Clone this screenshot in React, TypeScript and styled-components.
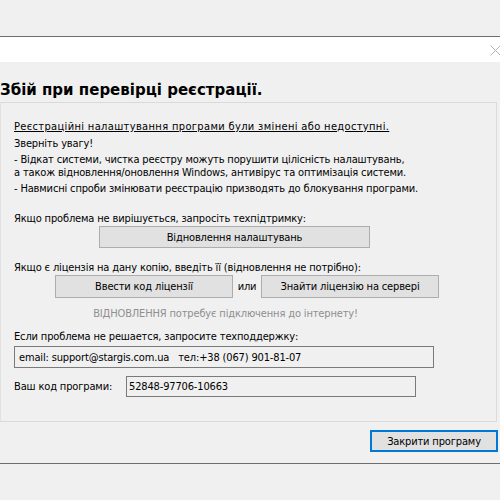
import React from "react";
import styled, { createGlobalStyle } from "styled-components";

const Global = createGlobalStyle`
  html, body { margin: 0; padding: 0; background: #f0f0f0; }
  body { width: 500px; height: 500px; overflow: hidden; font-family: "DejaVu Sans Condensed", "DejaVu Sans", Tahoma, sans-serif; font-size: 11px; letter-spacing: -0.15px; color: #000; }
`;

const Page = styled.div`
  width: 500px;
  height: 500px;
  display: flex;
  flex-direction: column;
  background: #f0f0f0;
`;

const TopStrip = styled.div`
  height: 36px;
  background: #f0f0f0;
`;

const Window = styled.div`
  border-top: 1px solid #6e6e6e;
  border-bottom: 1px solid #6e6e6e;
  background: #f0f0f0;
  display: flex;
  flex-direction: column;
`;

const TitleBar = styled.div`
  height: 25px;
  background: #ffffff;
  display: flex;
  align-items: center;
  justify-content: flex-end;
  overflow: hidden;
`;

const CloseGlyph = styled.svg`
  width: 11px;
  height: 11px;
  margin-right: -1px;
  margin-top: 1px;
`;

const Heading = styled.h1`
  margin: 18px 0 2px 0;
  font-family: "DejaVu Sans", Tahoma, sans-serif;
  font-weight: bold;
  font-size: 15px;
  letter-spacing: 0;
  line-height: 20px;
  white-space: nowrap;
`;

const Panel = styled.div`
  margin-right: 3px;
  border: 1px solid #dadada;
  border-left-color: #e2e2e2;
  padding: 17px 0 24px 13px;
  display: flex;
  flex-direction: column;
`;

const Line = styled.div<{ $mt?: number; $u?: boolean }>`
  line-height: 13px;
  margin-top: ${(p) => p.$mt ?? 0}px;
  text-decoration: ${(p) => (p.$u ? "underline" : "none")};
  letter-spacing: ${(p) => (p.$u ? "0.35px" : "inherit")};
  white-space: nowrap;
`;

const Notice = styled(Line)`
  color: #8f8f8f;
  margin-left: 79px;
  width: 265px;
  text-align: center;
`;

const Button = styled.button<{ $w: number; $h?: number }>`
  width: ${(p) => p.$w}px;
  height: ${(p) => p.$h ?? 22}px;
  background: #e1e1e1;
  border: 1px solid #adadad;
  font: inherit;
  letter-spacing: inherit;
  color: #000;
  padding: 0;
  flex: none;
  white-space: nowrap;
`;

const Row = styled.div<{ $mt: number; $ml?: number }>`
  display: flex;
  align-items: center;
  margin-top: ${(p) => p.$mt}px;
  margin-left: ${(p) => p.$ml ?? 0}px;
`;

const Or = styled.span`
  width: 28px;
  text-align: center;
`;

const Field = styled.div<{ $w: number; $h: number; $pl: number }>`
  width: ${(p) => p.$w}px;
  height: ${(p) => p.$h}px;
  flex: none;
  box-sizing: border-box;
  border: 1px solid #7a7a7a;
  background: #f0f0f0;
  padding-left: ${(p) => p.$pl}px;
  display: flex;
  align-items: center;
  white-space: pre;
`;

const CodeLabel = styled.span`
  width: 112px;
  flex: none;
  white-space: nowrap;
`;

const Footer = styled.div`
  display: flex;
  justify-content: flex-end;
  padding: 8px 2px 11px 0;
`;

const PrimaryButton = styled.button`
  width: 128px;
  height: 22px;
  background: #e1e1e1;
  border: 2px solid #0078d7;
  font: inherit;
  letter-spacing: inherit;
  color: #000;
  padding: 0;
`;

export default function App() {
  return (
    <Page>
      <Global />
      <TopStrip />
      <Window>
        <TitleBar>
          <CloseGlyph viewBox="0 0 11 11">
            <path d="M0.5 0.5 L10.5 10.5 M10.5 0.5 L0.5 10.5" stroke="#b4b4b4" strokeWidth="1" fill="none" />
          </CloseGlyph>
        </TitleBar>
        <Heading>Збій при перевірці реєстрації.</Heading>
        <Panel>
          <Line $u>Реєстраційні налаштування програми були змінені або недоступні.</Line>
          <Line $mt={4}>Зверніть увагу!</Line>
          <Line $mt={3}>- Відкат системи, чистка реєстру можуть порушити цілісність налаштувань,</Line>
          <Line>а також відновлення/оновлення Windows, антивірус та оптимізація системи.</Line>
          <Line $mt={3}>- Навмисні спроби змінювати реєстрацію призводять до блокування програми.</Line>
          <Line $mt={17}>Якщо проблема не вирішується, запросіть техпідтримку:</Line>
          <Row $mt={1} $ml={85}>
            <Button $w={271}>Відновлення налаштувань</Button>
          </Row>
          <Line $mt={13}>Якщо є ліцензія на дану копію, введіть її (відновлення не потрібно):</Line>
          <Row $mt={1} $ml={41}>
            <Button $w={178} $h={23}>Ввести код ліцензії</Button>
            <Or>или</Or>
            <Button $w={178} $h={23}>Знайти ліцензію на сервері</Button>
          </Row>
          <Notice $mt={9}>ВІДНОВЛЕННЯ потребує підключення до інтернету!</Notice>
          <Line $mt={10}>Если проблема не решается, запросите техподдержку:</Line>
          <Row $mt={3}>
            <Field $w={420} $h={22} $pl={4}>email: support@stargis.com.ua   тел:+38 (067) 901-81-07</Field>
          </Row>
          <Row $mt={8}>
            <CodeLabel>Ваш код програми:</CodeLabel>
            <Field $w={290} $h={21} $pl={2}>52848-97706-10663</Field>
          </Row>
        </Panel>
        <Footer>
          <PrimaryButton>Закрити програму</PrimaryButton>
        </Footer>
      </Window>
    </Page>
  );
}
